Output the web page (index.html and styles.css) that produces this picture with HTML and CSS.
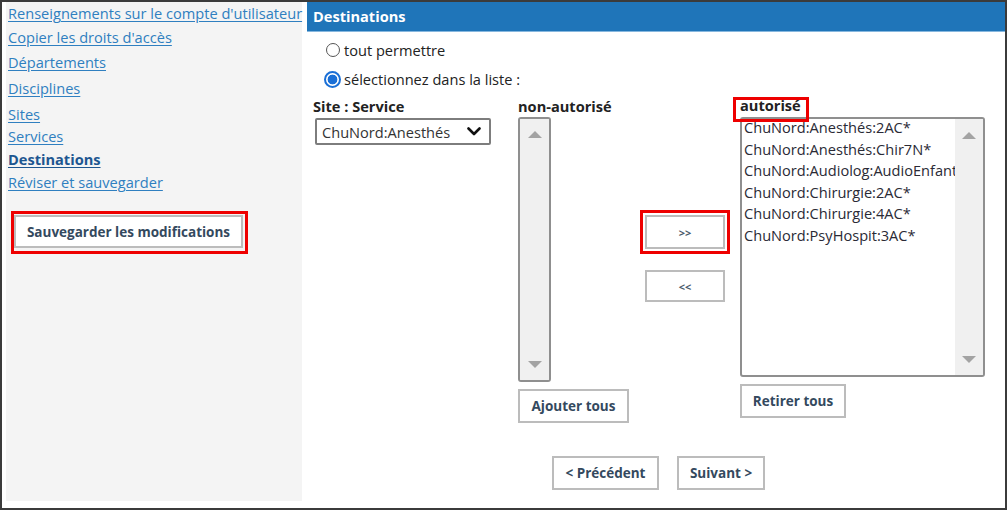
FILE: index.html
```html
<!DOCTYPE html>
<html lang="fr">
<head>
<meta charset="utf-8">
<title>Destinations</title>
<link rel="stylesheet" href="styles.css">
</head>
<body>
<div class="frame">
  <aside class="sidebar">
    <nav class="nav">
      <a class="nav-link" href="#">Renseignements sur le compte d'utilisateur</a>
      <a class="nav-link sp-2" href="#">Copier les droits d'accès</a>
      <a class="nav-link sp-3" href="#">Départements</a>
      <a class="nav-link sp-4" href="#">Disciplines</a>
      <a class="nav-link sp-4" href="#">Sites</a>
      <a class="nav-link sp-0" href="#">Services</a>
      <a class="nav-link nav-current sp-1" href="#">Destinations</a>
      <a class="nav-link sp-1" href="#">Réviser et sauvegarder</a>
    </nav>
    <div class="mark mark-save"><button class="btn btn-save" type="button">Sauvegarder les modifications</button></div>
  </aside>
  <main class="panel">
    <div class="panel-header">Destinations</div>
    <div class="panel-body">
      <div class="radios">
        <label class="radio-row"><span class="radio"></span>tout permettre</label>
        <label class="radio-row"><span class="radio radio-on"></span>sélectionnez dans la liste :</label>
      </div>
      <div class="columns">
        <div class="col col-site">
          <div class="col-label">Site : Service</div>
          <div class="select">
            <span>ChuNord:Anesthés</span>
            <svg class="chevron" width="14" height="9" viewBox="0 0 14 9"><polyline points="1.5,1.5 7,7 12.5,1.5" fill="none" stroke="#111" stroke-width="2.6" stroke-linecap="round" stroke-linejoin="round"/></svg>
          </div>
        </div>
        <div class="col col-denied">
          <div class="col-label">non-autorisé</div>
          <div class="listbox listbox-empty">
            <div class="scrollbar"><span class="arrow arrow-up"></span><span class="arrow arrow-down"></span></div>
          </div>
          <button class="btn btn-add" type="button">Ajouter tous</button>
        </div>
        <div class="col col-move">
          <div class="mark mark-move"><button class="btn btn-arrow" type="button">&gt;&gt;</button></div>
          <button class="btn btn-arrow btn-back" type="button">&lt;&lt;</button>
        </div>
        <div class="col col-allowed">
          <div class="col-label mark mark-label">autorisé</div>
          <div class="listbox listbox-allowed">
            <ul class="items">
              <li>ChuNord:Anesthés:2AC*</li>
              <li>ChuNord:Anesthés:Chir7N*</li>
              <li>ChuNord:Audiolog:AudioEnfant*</li>
              <li>ChuNord:Chirurgie:2AC*</li>
              <li>ChuNord:Chirurgie:4AC*</li>
              <li>ChuNord:PsyHospit:3AC*</li>
            </ul>
            <div class="scrollbar scrollbar-wide"><span class="arrow arrow-up"></span><span class="arrow arrow-down"></span></div>
          </div>
          <button class="btn btn-remove" type="button">Retirer tous</button>
        </div>
      </div>
      <div class="pager">
        <button class="btn btn-prev" type="button">&lt; Précédent</button>
        <button class="btn btn-next" type="button">Suivant &gt;</button>
      </div>
    </div>
  </main>
</div>
</body>
</html>
```
FILE: styles.css
```css
* { box-sizing: border-box; }
html, body { margin: 0; padding: 0; background: #fff; }
body { font-family: "Open Sans", "DejaVu Sans", sans-serif; font-size: 14.6px; color: #222; }

.frame {
  width: 1007px;
  height: 510px;
  border: 2px solid #3b3b3b;
  display: flex;
  background: #fff;
  overflow: hidden;
}

/* sidebar */
.sidebar {
  margin-left: 4px;
  width: 296px;
  height: 499px;
  background: #f4f4f4;
  padding-left: 2px;
  display: flex;
  flex-direction: column;
}
.nav { display: flex; flex-direction: column; align-items: flex-start; }
.nav-link {
  display: block;
  line-height: 22px;
  color: #2f7fc0;
  text-decoration: underline;
  text-underline-offset: 2px;
  white-space: nowrap;
}
.nav-current { font-weight: 700; color: #1d5690; }
.sp-0 { margin-top: 0; }
.sp-1 { margin-top: 1px; }
.sp-2 { margin-top: 2px; }
.sp-3 { margin-top: 3px; }
.sp-4 { margin-top: 4px; }

/* red annotation marks */
.mark { border: 3px solid #ee0000; }
.mark-save {
  align-self: flex-start;
  margin-top: 18px;
  margin-left: 3px;
  padding: 1px 2px 3px 0;
}

/* buttons */
.btn {
  font-family: "Open Sans", "DejaVu Sans", sans-serif;
  font-size: 13.5px;
  font-weight: 700;
  color: #34495e;
  background: #fff;
  border: 2px solid #bcbcbc;
  border-radius: 0;
  padding: 0;
  margin: 0;
  display: block;
}
.btn-save { width: 229px; height: 33px; }

/* panel */
.panel {
  margin-left: 5px;
  width: 698px;
  display: flex;
  flex-direction: column;
}
.panel-header {
  height: 30px;
  line-height: 29px;
  background: #1f75b9;
  border-bottom: 1px solid #86b7de;
  color: #fff;
  font-weight: 700;
  padding-left: 6px;
}
.panel-body { padding-left: 6px; }

.radios {
  margin-top: 8px;
  display: flex;
  flex-direction: column;
  gap: 9px;
}
.radio-row {
  display: flex;
  align-items: center;
  height: 20px;
  padding-left: 13px;
  color: #222;
}
.radio {
  width: 14px;
  height: 14px;
  border: 1px solid #555;
  border-radius: 50%;
  background: #fff;
  margin-right: 4px;
}
.radio-on {
  width: 17px;
  height: 17px;
  margin-left: -2px;
  margin-right: 3px;
  border: 2px solid #1a6fd6;
  background: radial-gradient(circle, #1a6fd6 0 4.6px, #fff 5.2px);
}

.columns {
  margin-top: 7px;
  display: flex;
  align-items: flex-start;
}
.col { display: flex; flex-direction: column; align-items: flex-start; }
.col-label {
  font-weight: 700;
  line-height: 20px;
  height: 20px;
  color: #222;
  white-space: nowrap;
}
.col-site { width: 205px; }
.select {
  margin: 2px 0 0 2px;
  width: 176px;
  height: 27px;
  border: 2px solid #7d7d7d;
  border-radius: 2px;
  display: flex;
  align-items: center;
  justify-content: space-between;
  padding: 0 8px 0 5px;
  color: #333;
  background: #fff;
}
.chevron { display: block; }

.col-denied { width: 122px; }
.listbox {
  border: 2px solid #8f8f8f;
  border-radius: 3px;
  background: #fff;
  overflow: hidden;
}
.listbox-empty {
  margin-top: 1px;
  width: 33px;
  height: 265px;
  display: flex;
}
.scrollbar {
  flex: 1;
  background: #f0f0f0;
  display: flex;
  flex-direction: column;
  align-items: center;
  justify-content: space-between;
  padding: 12px 0 12px;
}
.scrollbar-wide { flex: 0 0 28px; padding: 13px 0 12px; }
.arrow { width: 0; height: 0; border-left: 7px solid transparent; border-right: 7px solid transparent; }
.arrow-up { border-bottom: 7px solid #a3a3a3; }
.arrow-down { border-top: 7px solid #a3a3a3; }

.btn-add { margin-top: 7px; width: 111px; height: 34px; }

.col-move { width: 93px; }
.mark-move { margin-top: 114px; padding: 2px; }
.btn-arrow {
  width: 80px;
  height: 34px;
  font-size: 11px;
  font-weight: 700;
  color: #4a5a6a;
}
.btn-back { margin-top: 16px; margin-left: 5px; height: 32px; }

.col-allowed { width: 260px; }
.mark-label {
  position: relative;
  z-index: 1;
  margin-top: 1px;
  margin-bottom: -5px;
  width: 76px;
  height: 25px;
  line-height: 11px;
  padding-left: 4px;
}
.listbox-allowed {
  margin-left: 7px;
  width: 245px;
  height: 260px;
  display: flex;
}
.items {
  list-style: none;
  margin: -2px 0 0 0;
  padding: 0 0 0 2px;
  flex: 1;
  overflow: hidden;
  min-width: 0;
}
.items li {
  line-height: 21.6px;
  white-space: nowrap;
  color: #2a2a35;
}
.btn-remove { margin-top: 7px; margin-left: 7px; width: 106px; height: 34px; }

.pager {
  margin-top: 33px;
  padding-left: 239px;
  display: flex;
  gap: 18px;
}
.btn-prev { width: 107px; height: 34px; }
.btn-next { width: 88px; height: 34px; }
```
